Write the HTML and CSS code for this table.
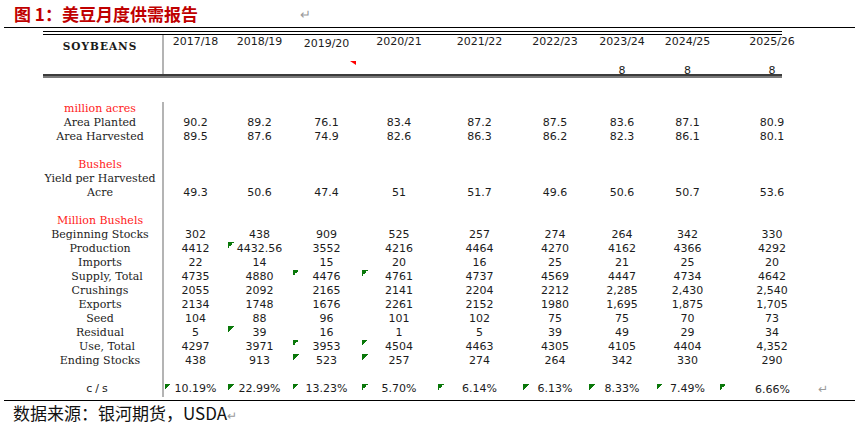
FILE: index.html
```
<!DOCTYPE html>
<html lang="zh-CN">
<head>
<meta charset="utf-8">
<title>美豆月度供需报告</title>
<link rel="stylesheet" href="styles.css">
</head>
<body>
<div class="title"><span>图 1：美豆月度供需报告</span><span class="mark">↵</span></div>
<div class="rule"></div>
<div class="table">
  <div class="dbl"></div>
  <div class="head cols">
    <div class="label soy">SOYBEANS</div>
    <div class="yr">2017/18</div><div class="yr">2018/19</div><div class="yr low">2019/20</div><div class="yr">2020/21</div><div class="yr">2021/22</div><div class="yr">2022/23</div><div class="yr">2023/24</div><div class="yr">2024/25</div><div class="yr">2025/26</div>
    <div class="yr2"></div><div class="yr2"></div><div class="yr2 rt"></div><div class="yr2"></div><div class="yr2"></div><div class="yr2"></div><div class="yr2">8</div><div class="yr2">8</div><div class="yr2">8</div>
  </div>
  <div class="thick"></div>
  <div class="body">
    <div class="row cols"><span class="label red">million acres</span></div>
    <div class="row cols"><span class="label">Area Planted</span><span>90.2</span><span>89.2</span><span>76.1</span><span>83.4</span><span>87.2</span><span>87.5</span><span>83.6</span><span>87.1</span><span>80.9</span></div>
    <div class="row cols"><span class="label">Area Harvested</span><span>89.5</span><span>87.6</span><span>74.9</span><span>82.6</span><span>86.3</span><span>86.2</span><span>82.3</span><span>86.1</span><span>80.1</span></div>
    <div class="row cols"><span class="label"></span></div>
    <div class="row cols"><span class="label red">Bushels</span></div>
    <div class="row cols"><span class="label">Yield per Harvested</span></div>
    <div class="row cols"><span class="label">Acre</span><span>49.3</span><span>50.6</span><span>47.4</span><span>51</span><span>51.7</span><span>49.6</span><span>50.6</span><span>50.7</span><span>53.6</span></div>
    <div class="row cols"><span class="label"></span></div>
    <div class="row cols"><span class="label red">Million Bushels</span></div>
    <div class="row cols"><span class="label">Beginning Stocks</span><span>302</span><span>438</span><span>909</span><span>525</span><span>257</span><span>274</span><span>264</span><span>342</span><span>330</span></div>
    <div class="row cols"><span class="label">Production</span><span>4412</span><span class="g">4432.56</span><span>3552</span><span>4216</span><span>4464</span><span>4270</span><span>4162</span><span>4366</span><span>4292</span></div>
    <div class="row cols"><span class="label">Imports</span><span>22</span><span>14</span><span>15</span><span>20</span><span>16</span><span>25</span><span>21</span><span>25</span><span>20</span></div>
    <div class="row cols"><span class="label indent">Supply, Total</span><span>4735</span><span>4880</span><span class="g">4476</span><span class="g">4761</span><span>4737</span><span>4569</span><span>4447</span><span>4734</span><span>4642</span></div>
    <div class="row cols"><span class="label">Crushings</span><span>2055</span><span>2092</span><span>2165</span><span>2141</span><span>2204</span><span>2212</span><span>2,285</span><span>2,430</span><span>2,540</span></div>
    <div class="row cols"><span class="label">Exports</span><span>2134</span><span>1748</span><span>1676</span><span>2261</span><span>2152</span><span>1980</span><span>1,695</span><span>1,875</span><span>1,705</span></div>
    <div class="row cols"><span class="label">Seed</span><span>104</span><span>88</span><span>96</span><span>101</span><span>102</span><span>75</span><span>75</span><span>70</span><span>73</span></div>
    <div class="row cols"><span class="label">Residual</span><span>5</span><span class="g">39</span><span>16</span><span>1</span><span>5</span><span>39</span><span>49</span><span>29</span><span>34</span></div>
    <div class="row cols"><span class="label indent">Use, Total</span><span>4297</span><span>3971</span><span class="g">3953</span><span class="g">4504</span><span>4463</span><span>4305</span><span>4105</span><span>4404</span><span>4,352</span></div>
    <div class="row cols"><span class="label">Ending Stocks</span><span>438</span><span>913</span><span class="g">523</span><span class="g">257</span><span>274</span><span>264</span><span>342</span><span>330</span><span>290</span></div>
    <div class="row cols"><span class="label"></span></div>
    <div class="row cols cs"><span class="label csl">c/s</span><span class="g">10.19%</span><span class="g">22.99%</span><span class="g">13.23%</span><span class="g">5.70%</span><span class="g">6.14%</span><span class="g">6.13%</span><span class="g">8.33%</span><span class="g">7.49%</span><span class="g last">6.66%<span class="ret">↵</span></span></div>
  </div>
</div>
<div class="rule bottom"></div>
<div class="source">数据来源：银河期货，USDA<span class="ret2">↵</span></div>
</body>
</html>
```
FILE: styles.css
```
* { box-sizing: border-box; margin: 0; padding: 0; }
html, body { width: 860px; height: 426px; overflow: hidden; background: #fff; }
body { font-family: "DejaVu Sans", "Noto Sans", sans-serif; color: #1c1c1c; }

.title {
  height: 27px;
  display: flex;
  align-items: center;
  padding-left: 14px;
  font-family: "Noto Sans CJK SC", sans-serif;
  font-weight: 700;
  font-size: 17px;
  color: #c00000;
}
.title .mark {
  margin-left: 102px;
  font-weight: 400;
  font-size: 13px;
  color: #9a9a9a;
}
.rule { margin: 0 5px 0 4px; border-top: 1px solid #000; }
.rule.bottom { margin-top: 4px; }

.table { margin-left: 43px; width: 739px; margin-top: 3px; }
.dbl { height: 4px; border-top: 1px solid #000; border-bottom: 1px solid #000; }
.cols {
  display: grid;
  grid-template-columns: 121px 63px 65px 69px 76px 85px 66px 68px 63px 106px;
}
.head {
  height: 39px;
  grid-template-rows: 29px 10px;
  font-size: 11px;
  line-height: 13px;
}
.head .soy {
  grid-row: 1 / 3;
  padding-top: 5px;
  font-family: "DejaVu Serif", serif;
  font-weight: 700;
  font-size: 10.5px;
  letter-spacing: 1px;
  color: #1a1a1a;
}
.yr { text-align: center; white-space: nowrap; }
.yr.low { padding-top: 2px; }
.yr2 { text-align: center; position: relative; }
.rt::after {
  content: "";
  position: absolute;
  top: -3px;
  right: 5px;
  border-top: 4px solid #ff0000;
  border-left: 6px solid transparent;
}
.thick { height: 4px; border-top: 2px solid #3c3c3c; background: #7a7a7a; }

.body { padding-top: 24px; }
.row { height: 14px; line-height: 14px; font-size: 11px; }
.row span { text-align: center; white-space: nowrap; }
.label {
  border-right: 2px solid #b4b4b4;
  text-align: center;
  padding-right: 5px;
  font-family: "DejaVu Serif", serif;
  font-size: 11px;
  white-space: nowrap;
}
.row .label.indent { padding-left: 14px; }
.red { color: #ff1a1a; }
.row .csl {
  font-family: "DejaVu Sans", sans-serif;
  font-size: 11px;
  letter-spacing: 3px;
  padding-right: 8px;
}
.row .g {
  background-image: linear-gradient(135deg, #0a780a 50%, transparent 50%);
  background-repeat: no-repeat;
  background-size: 6px 6px;
  background-position: 1px 0;
}
.row.cs .g { background-position: 1px 2px; }
.row .last { padding-left: 36px; }
.row .ret { margin-left: 28px; color: #9a9a9a; font-size: 12px; }

.source {
  height: 25px;
  line-height: 24px;
  padding-left: 13px;
  font-family: "Noto Sans CJK SC", sans-serif;
  font-size: 17px;
  color: #111;
}
.ret2 { font-size: 12px; color: #9a9a9a; }
```
